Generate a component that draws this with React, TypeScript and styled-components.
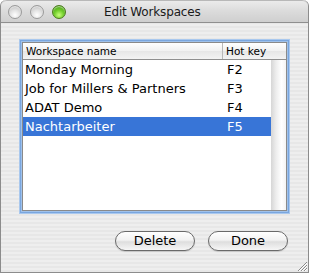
import React from "react";
import styled, { createGlobalStyle } from "styled-components";

const Global = createGlobalStyle`
  html, body { margin: 0; padding: 0; background: #ffffff; }
  body { width: 309px; height: 273px; overflow: hidden; }
  * { box-sizing: border-box; }
`;

const Window = styled.div`
  width: 309px;
  height: 273px;
  display: flex;
  flex-direction: column;
  border: 1px solid #8c8c8c;
  border-top: none;
  border-top-left-radius: 6px;
  border-top-right-radius: 6px;
  overflow: hidden;
  font-family: "DejaVu Sans", "Noto Sans", sans-serif;
  background: repeating-linear-gradient(
    to bottom,
    #eeeeee 0px,
    #eeeeee 2px,
    #e7e7e7 2px,
    #e7e7e7 4px
  );
  position: relative;
`;

const TitleBar = styled.div`
  height: 23px;
  flex: none;
  display: flex;
  align-items: center;
  padding-left: 7px;
  border-bottom: 1px solid #8f8f8f;
  border-top: 1px solid #b8b8b8;
  border-top-left-radius: 6px;
  border-top-right-radius: 6px;
  background: linear-gradient(to bottom, #ebebeb 0%, #dcdcdc 45%, #cfcfcf 100%);
  position: relative;
`;

const Lights = styled.div`
  display: flex;
  gap: 8px;
  align-items: center;
`;

const Light = styled.div<{ $green?: boolean }>`
  width: 14px;
  height: 14px;
  border-radius: 50%;
  border: 1px solid ${(p) => (p.$green ? "#4a7a1c" : "#9a9a9a")};
  background: ${(p) =>
    p.$green
      ? "radial-gradient(circle at 50% 75%, #c8ff7a 0%, #6fcc2a 45%, #3f8f10 100%)"
      : "radial-gradient(circle at 50% 75%, #ffffff 0%, #e2e2e2 45%, #b4b4b4 100%)"};
  box-shadow: inset 0 1px 1px rgba(255, 255, 255, 0.6);
`;

const Title = styled.div`
  position: absolute;
  left: 103px;
  top: 4px;
  font-size: 12px;
  letter-spacing: -0.15px;
  color: #1a1a1a;
`;

const Body = styled.div`
  flex: 1;
  display: flex;
  flex-direction: column;
  padding: 17px 19px 0 19px;
`;

const TableFrame = styled.div`
  height: 173px;
  border: 1px solid #7aa6de;
  box-shadow: 0 0 0 1px #a9c8ee, inset 0 0 0 1px #9fc1ea;
  padding: 1px;
  display: flex;
`;

const Table = styled.div`
  flex: 1;
  display: flex;
  flex-direction: column;
  background: #ffffff;
  border: 1px solid #8a8a8a;
`;

const HeaderRow = styled.div`
  height: 17px;
  flex: none;
  display: flex;
  border-bottom: 1px solid #8f8f8f;
  background: linear-gradient(to bottom, #ffffff 0%, #f1f1f1 50%, #e6e6e6 51%, #f3f3f3 100%);
`;

const HeaderCell = styled.div<{ $w?: number }>`
  ${(p) => (p.$w ? `width: ${p.$w}px; flex: none;` : "flex: 1;")}
  font-size: 10.5px;
  line-height: 16px;
  padding-left: 3px;
  color: #000;
  border-right: ${(p) => (p.$w ? "1px solid #b8b8b8" : "none")};
  white-space: nowrap;
`;

const BodyArea = styled.div`
  flex: 1;
  display: flex;
`;

const Rows = styled.div`
  flex: 1;
  display: flex;
  flex-direction: column;
`;

const Row = styled.div<{ $sel?: boolean }>`
  height: 19px;
  display: flex;
  align-items: center;
  background: ${(p) => (p.$sel ? "#3875d7" : "transparent")};
  color: ${(p) => (p.$sel ? "#ffffff" : "#000000")};
  font-size: 13px;
`;

const NameCell = styled.div`
  width: 198px;
  padding-left: 2px;
  white-space: nowrap;
`;

const KeyCell = styled.div`
  flex: 1;
  padding-left: 6px;
`;

const ScrollTrack = styled.div`
  width: 15px;
  flex: none;
  background: linear-gradient(to right, #d6d6d6 0%, #eeeeee 35%, #ffffff 70%, #f4f4f4 100%);
`;

const ButtonRow = styled.div`
  display: flex;
  justify-content: flex-end;
  gap: 13px;
  margin-top: 18px;
  padding-right: 1px;
`;

const Button = styled.button`
  width: 80px;
  height: 20px;
  border-radius: 10px;
  border: 1px solid #6a6a6a;
  background: linear-gradient(to bottom, #ffffff 0%, #f2f2f2 45%, #dedede 55%, #f6f6f6 100%);
  font-family: "DejaVu Sans", "Noto Sans", sans-serif;
  font-size: 13px;
  color: #000;
  padding: 0;
  line-height: 18px;
  box-shadow: 0 1px 1px rgba(0, 0, 0, 0.15);
`;

const Grip = styled.svg`
  position: absolute;
  right: 1px;
  bottom: 1px;
`;

const data = [
  { name: "Monday Morning", key: "F2" },
  { name: "Job for Millers & Partners", key: "F3" },
  { name: "ADAT Demo", key: "F4" },
  { name: "Nachtarbeiter", key: "F5", sel: true },
];

export default function App() {
  return (
    <>
      <Global />
      <Window>
        <TitleBar>
          <Lights>
            <Light />
            <Light />
            <Light $green />
          </Lights>
          <Title>Edit Workspaces</Title>
        </TitleBar>
        <Body>
          <TableFrame>
            <Table>
              <HeaderRow>
                <HeaderCell $w={200}>Workspace name</HeaderCell>
                <HeaderCell>Hot key</HeaderCell>
              </HeaderRow>
              <BodyArea>
                <Rows>
                  {data.map((r) => (
                    <Row key={r.name} $sel={r.sel}>
                      <NameCell>{r.name}</NameCell>
                      <KeyCell>{r.key}</KeyCell>
                    </Row>
                  ))}
                </Rows>
                <ScrollTrack />
              </BodyArea>
            </Table>
          </TableFrame>
          <ButtonRow>
            <Button>Delete</Button>
            <Button>Done</Button>
          </ButtonRow>
        </Body>
        <Grip width="11" height="11" viewBox="0 0 11 11">
          <line x1="2" y1="11" x2="11" y2="2" stroke="#8a8a8a" strokeWidth="1" />
          <line x1="3" y1="11" x2="11" y2="3" stroke="#ffffff" strokeWidth="1" />
          <line x1="5" y1="11" x2="11" y2="5" stroke="#8a8a8a" strokeWidth="1" />
          <line x1="6" y1="11" x2="11" y2="6" stroke="#ffffff" strokeWidth="1" />
          <line x1="8" y1="11" x2="11" y2="8" stroke="#8a8a8a" strokeWidth="1" />
          <line x1="9" y1="11" x2="11" y2="9" stroke="#ffffff" strokeWidth="1" />
        </Grip>
      </Window>
    </>
  );
}
